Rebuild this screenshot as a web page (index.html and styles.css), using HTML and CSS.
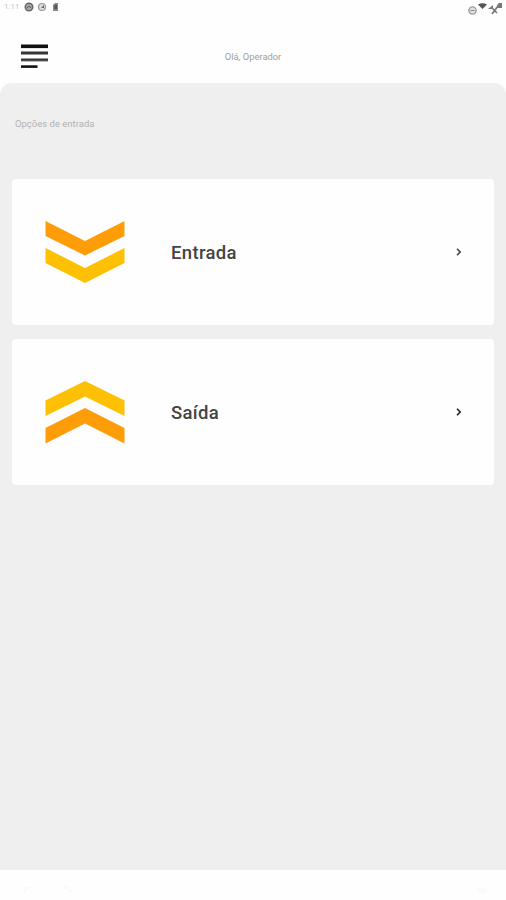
FILE: index.html
```html
<!DOCTYPE html>
<html lang="pt-BR">
<head>
<meta charset="utf-8">
<title>Operador</title>
<link rel="stylesheet" href="styles.css">
</head>
<body>
<div class="status">
  <div class="status-left">
    <span class="time">1:11</span>
    <svg width="36" height="10" viewBox="0 0 36 10">
      <circle cx="5" cy="5" r="3.7" fill="#aaa" stroke="#666" stroke-width="1.6"/><path d="M3 6l2-2 2 2" fill="none" stroke="#555"/>
      <circle cx="18" cy="5" r="3.5" fill="#ddd" stroke="#999" stroke-width="1.2"/><path d="M17 6l3-3v3z" fill="#666"/>
      <path d="M29 3l2-2h3v8h-5z" fill="#888"/><path d="M30.500 3h2.500v4h-2.500z" fill="#555"/>
    </svg>
  </div>
  <svg class="status-right" width="38" height="16" viewBox="0 0 38 16">
    <circle cx="7.500" cy="10.500" r="3.600" fill="#e2e2e2" stroke="#999" stroke-width="1.400"/><path d="M5.500 10.500h4" stroke="#888"/>
    <path d="M13 4.500q4.500-2.500 9 0L17.500 9z" fill="#555"/>
    <path d="M23 9l5-4v4zM32 5l2-2h3v5h-4z" fill="#777"/><path d="M27 8l5 5m1-7l-6 8" stroke="#777" stroke-width="1.700"/>
  </svg>
</div>
<header class="bar">
  <svg class="menu" width="28" height="26" viewBox="0 0 28 26">
    <path d="M0 2.300h27" stroke="#111" stroke-width="3.600"/>
    <path d="M0 9h27M0 15.900h27" stroke="#777" stroke-width="3.400"/>
    <path d="M0 9h27M0 15.900h27" stroke="#222" stroke-width="1.400"/>
    <path d="M0 22.600h16.500" stroke="#111" stroke-width="2.600"/>
  </svg>
  <span class="user">Olá, Operador</span>
</header>
<main class="panel">
  <h1 class="heading">Opções de entrada</h1>
  <div class="card">
    <svg class="arrows" width="80" height="64" viewBox="0 0 80 64">
      <path d="M.5 1l39.500 20L79.500 1v15L40 35.500.5 16z" fill="#ff9d08"/>
      <path d="M.5 28L40 48l39.500-20v15L40 63 .5 43z" fill="#fdc004"/>
    </svg>
    <span class="label">Entrada</span>
    <svg class="chevron" width="8" height="10" viewBox="0 0 8 10"><path d="M2 1.800L5.200 5 2 8.200" fill="none" stroke="#444" stroke-width="1.600"/></svg>
  </div>
  <div class="card">
    <svg class="arrows" width="80" height="64" viewBox="0 0 80 64">
      <path d="M.5 20.500L40 1l39.500 19.500V36L40 16.500.5 36z" fill="#fdc004"/>
      <path d="M.5 48L40 28l39.500 20v15.500L40 43.500.5 63.500z" fill="#ff9d08"/>
    </svg>
    <span class="label">Saída</span>
    <svg class="chevron" width="8" height="10" viewBox="0 0 8 10"><path d="M2 1.800L5.200 5 2 8.200" fill="none" stroke="#222" stroke-width="1.600"/></svg>
  </div>
</main>
<footer class="nav">
  <svg width="506" height="30" viewBox="0 0 506 30">
    <path d="M20 17h10v2h-4v5h-2v-5h-4zM63 16h6v3h4v3h-4v-3h-6zM477 18h10v5h-10z" fill="#fafafa"/>
  </svg>
</footer>
</body>
</html>
```
FILE: styles.css
```css
* { box-sizing: border-box; }
body {
  margin: 0;
  height: 900px;
  display: flex;
  flex-direction: column;
  background: #fefefe;
  font-family: Roboto, "Liberation Sans", sans-serif;
  overflow: hidden;
}
.status {
  height: 30px;
  padding: 0 3px 0 4px;
  display: flex;
  justify-content: space-between;
  align-items: flex-start;
}
.status svg { filter: blur(0.4px); }
.status-left { display: flex; align-items: center; padding-top: 2px; }
.time { width: 20px; font-size: 8px; line-height: 10px; color: #c4c4c4; }
.bar {
  height: 53px;
  padding: 0 21px;
  display: grid;
  grid-template-columns: 28px 1fr 28px;
  align-items: center;
}
.menu { display: block; }
.user {
  text-align: center;
  font-size: 9.4px;
  line-height: 12px;
  color: #a0a0a0;
}
.panel {
  flex: 1;
  padding: 35px 12px 0;
  display: flex;
  flex-direction: column;
  border-radius: 12px 12px 0 0;
  background: #efefef;
}
.heading {
  margin: 0 0 49px 3px;
  font-size: 9.5px;
  line-height: 12px;
  font-weight: 400;
  color: #b2b2b2;
}
.card {
  height: 146px;
  margin-bottom: 14px;
  padding: 0 31px 0 33px;
  display: flex;
  align-items: center;
  border-radius: 4px;
  background: #fefefe;
}
.arrows { margin-right: 46px; }
.label {
  flex: 1;
  padding-top: 2px;
  font-size: 18.5px;
  line-height: 24px;
  font-weight: 500;
  letter-spacing: 0.35px;
  color: #444;
}
.nav { height: 30px; }
.nav svg { display: block; }
```
